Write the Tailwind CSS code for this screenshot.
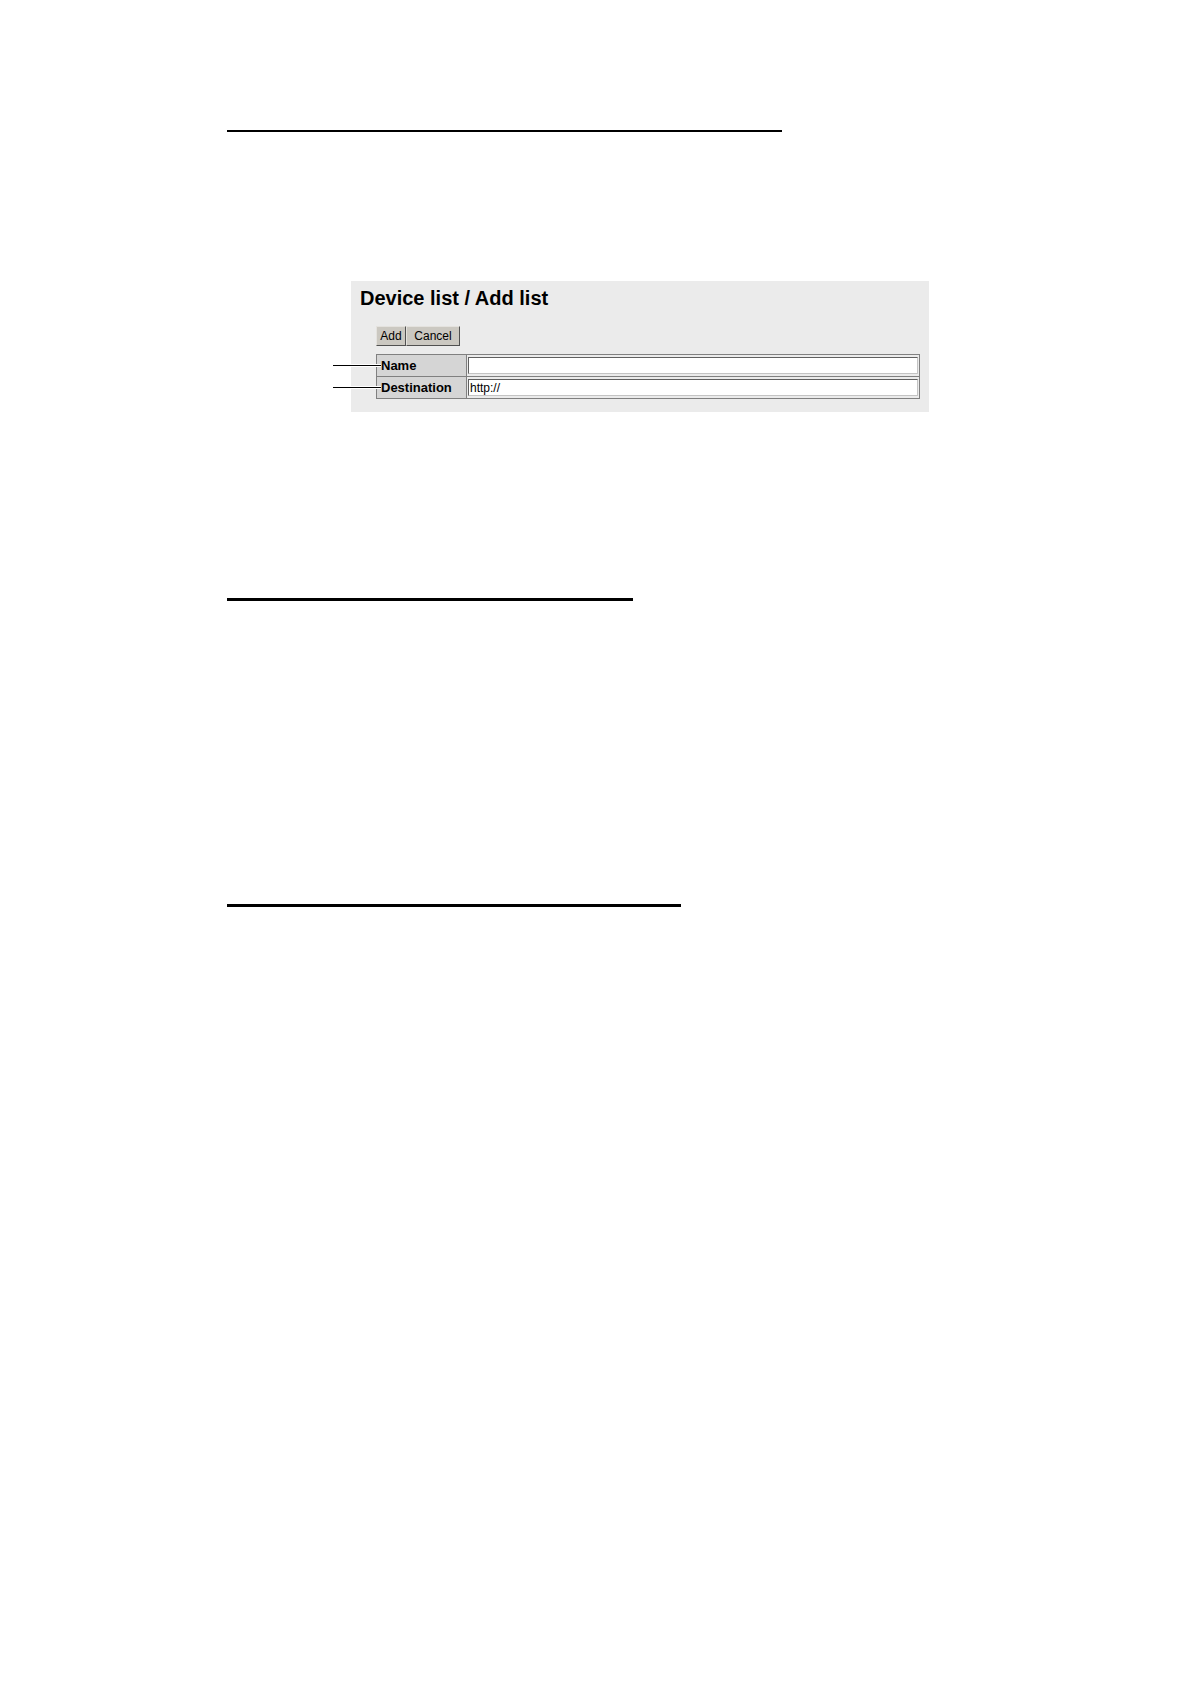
<!DOCTYPE html>
<html lang="en">

<head>
    <title>Device list / Add list</title>
    <meta charset="UTF-8">
    <meta name="viewport" content="width=device-width, initial-scale=1">
    <script src="https://cdn.jsdelivr.net/npm/@tailwindcss/browser@4"></script>
</head>

<body class="bg-white text-black font-['Liberation_Sans',Arial,sans-serif]">
    <main class="pl-[227px] pr-[261px] pt-[130px]">
        <hr class="w-full max-w-[555px] border-0 h-[2px] bg-black">

        <form class="ml-[124px] mt-[149px] bg-[#ebebeb] pl-[25px] pr-[9px] pb-[13px]">
            <h1 class="-ml-[16px] pt-[5px] text-[20px] leading-[24px] font-bold">Device list / Add list</h1>

            <div class="flex mt-[16px] text-[12px] leading-[16px]">
                <button type="submit" class="w-[30px] h-[20px] bg-[#cbc8c1] border border-t-[#e4e2de] border-l-[#e4e2de] border-r-[#505050] border-b-[#505050]">Add</button>
                <button type="button" class="w-[54px] h-[20px] bg-[#cbc8c1] border border-t-[#e4e2de] border-l-[#e4e2de] border-r-[#505050] border-b-[#505050]">Cancel</button>
            </div>

            <table class="w-full mt-[8px] border-collapse border border-[#808080]">
                <tr class="h-[22px]">
                    <th class="relative w-[90px] p-0 pl-[4px] border border-[#808080] bg-[#d5d5d5] text-left text-[13px] leading-[16px] font-bold">
                        <!-- callout line -->
                        <span class="absolute top-[9px] -left-[26px] w-[30px] h-[3px] bg-white"></span>
                        <span class="absolute top-[10px] -left-[44px] w-[48px] h-px bg-black"></span>
                        <label for="name">Name</label>
                    </th>
                    <td class="p-0 px-px border border-[#808080]">
                        <input id="name" type="text" class="block w-full h-[17px] px-px bg-white border border-t-[#606060] border-l-[#606060] border-r-[#c4c4c4] border-b-[#c4c4c4] text-[12px] leading-[15px]">
                    </td>
                </tr>
                <tr class="h-[22px]">
                    <th class="relative w-[90px] p-0 pl-[4px] border border-[#808080] bg-[#d5d5d5] text-left text-[13px] leading-[16px] font-bold">
                        <span class="absolute top-[9px] -left-[26px] w-[30px] h-[3px] bg-white"></span>
                        <span class="absolute top-[10px] -left-[44px] w-[48px] h-px bg-black"></span>
                        <label for="destination">Destination</label>
                    </th>
                    <td class="p-0 px-px border border-[#808080]">
                        <input id="destination" type="text" value="http://" class="block w-full h-[17px] px-px bg-white border border-t-[#606060] border-l-[#606060] border-r-[#c4c4c4] border-b-[#c4c4c4] text-[12px] leading-[15px]">
                    </td>
                </tr>
            </table>
        </form>

        <hr class="w-full max-w-[406px] mt-[186px] border-0 h-[3px] bg-black">
        <hr class="w-full max-w-[454px] mt-[303px] border-0 h-[3px] bg-black">
    </main>
</body>

</html>
